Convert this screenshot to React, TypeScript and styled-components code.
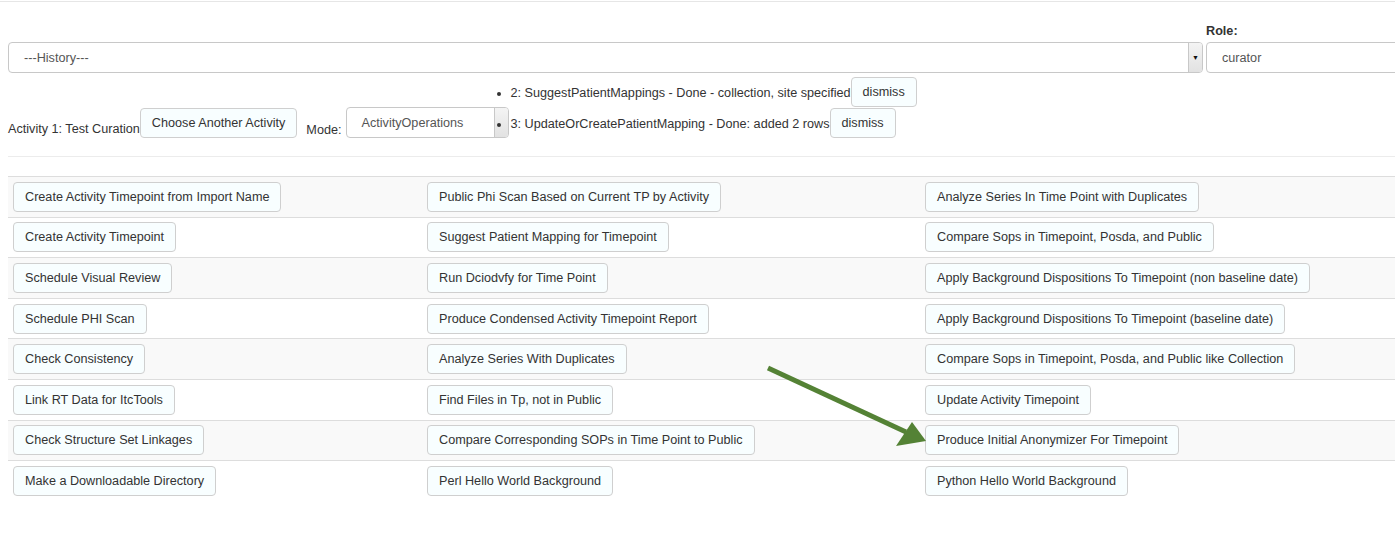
import React from "react";
import styled, { createGlobalStyle } from "styled-components";

const GlobalStyle = createGlobalStyle`
  html, body { margin: 0; padding: 0; background: #fff; }
  body {
    font-family: "Liberation Sans", Arial, Helvetica, sans-serif;
    font-size: 12.65px;
    color: #333;
    overflow: hidden;
    width: 1395px;
  }
  * { box-sizing: border-box; }
`;

const Page = styled.div`
  position: relative;
  width: 1395px;
  height: 551px;
  overflow: hidden;
`;

const TopRule = styled.div`
  margin-top: 1px;
  height: 1px;
  background: #e6e6e6;
`;

const Header = styled.div`
  display: flex;
  align-items: flex-end;
  gap: 3px;
  padding: 20px 0 0 8px;
  width: 1500px;
`;

const RoleColumn = styled.div`
  display: flex;
  flex-direction: column;
`;

const RoleLabel = styled.label`
  font-weight: bold;
  line-height: 18px;
  margin-bottom: 2px;
  color: #333;
`;

const SelectBox = styled.div<{ $w: number }>`
  display: flex;
  align-items: stretch;
  width: ${(p) => p.$w}px;
  height: 31px;
  border: 1px solid #c8c8c8;
  border-radius: 4px;
  background: #fff;
  color: #555;
  overflow: hidden;
`;

const SelectText = styled.span`
  flex: 1;
  display: flex;
  align-items: center;
  padding-left: 15px;
  white-space: nowrap;
`;

const ArrowBox = styled.span`
  width: 14px;
  display: flex;
  align-items: center;
  justify-content: center;
  background: linear-gradient(#f4f4f4, #e2e2e2);
  border-left: 1px solid #c8c8c8;
  font-size: 7px;
  color: #111;
`;

const ControlRow = styled.div`
  display: flex;
  align-items: flex-end;
  padding-left: 8px;
  margin-top: 4px;
  width: 1500px;
`;

const InlineLabel = styled.span<{ $ml?: number; $mr?: number; $pb?: number }>`
  line-height: 15px;
  margin-left: ${(p) => p.$ml ?? 0}px;
  margin-right: ${(p) => p.$mr ?? 0}px;
  padding-bottom: ${(p) => p.$pb ?? 0}px;
  white-space: nowrap;
`;

const Button = styled.button`
  font-family: "Liberation Sans", Arial, Helvetica, sans-serif;
  font-size: 12.65px;
  color: #333;
  height: 30px;
  padding: 0 11px;
  background: #f8feff;
  border: 1px solid #cfcfcf;
  border-radius: 4px;
  white-space: nowrap;
  line-height: 28px;
  cursor: pointer;
`;

const StatusList = styled.ul`
  margin: 0;
  padding: 0 0 0 2px;
  list-style: disc outside;
  display: flex;
  flex-direction: column;
  gap: 1px;
`;

const StatusItem = styled.li`
  display: list-item;
  height: 30px;
`;

const StatusLine = styled.span`
  display: inline-flex;
  align-items: center;
  height: 30px;
  white-space: nowrap;
`;

const StatusText = styled.span`
  padding-top: 1px;
`;

const Divider = styled.div`
  margin: 18px 0 0 8px;
  height: 1px;
  background: #ececec;
`;

const Table = styled.div`
  margin: 19px 0 0 8px;
  display: grid;
  grid-template-columns: 414px 498px 1fr;
`;

const Cell = styled.div<{ $striped: boolean }>`
  border-top: 1px solid #dddddd;
  background: ${(p) => (p.$striped ? "#f9f9f9" : "#fff")};
  padding: 4.8px 5px;
  display: flex;
  align-items: center;
`;

const ArrowOverlay = styled.svg`
  position: absolute;
  left: 760px;
  top: 360px;
  overflow: visible;
`;

const rows: [string, string, string][] = [
  ["Create Activity Timepoint from Import Name", "Public Phi Scan Based on Current TP by Activity", "Analyze Series In Time Point with Duplicates"],
  ["Create Activity Timepoint", "Suggest Patient Mapping for Timepoint", "Compare Sops in Timepoint, Posda, and Public"],
  ["Schedule Visual Review", "Run Dciodvfy for Time Point", "Apply Background Dispositions To Timepoint (non baseline date)"],
  ["Schedule PHI Scan", "Produce Condensed Activity Timepoint Report", "Apply Background Dispositions To Timepoint (baseline date)"],
  ["Check Consistency", "Analyze Series With Duplicates", "Compare Sops in Timepoint, Posda, and Public like Collection"],
  ["Link RT Data for ItcTools", "Find Files in Tp, not in Public", "Update Activity Timepoint"],
  ["Check Structure Set Linkages", "Compare Corresponding SOPs in Time Point to Public", "Produce Initial Anonymizer For Timepoint"],
  ["Make a Downloadable Directory", "Perl Hello World Background", "Python Hello World Background"],
];

export default function App() {
  return (
    <Page>
      <GlobalStyle />
      <TopRule />
      <Header>
        <SelectBox $w={1195}>
          <SelectText>---History---</SelectText>
          <ArrowBox>▼</ArrowBox>
        </SelectBox>
        <RoleColumn>
          <RoleLabel>Role:</RoleLabel>
          <SelectBox $w={260}>
            <SelectText>curator</SelectText>
          </SelectBox>
        </RoleColumn>
      </Header>
      <ControlRow>
        <InlineLabel $pb={1.5}>Activity 1: Test Curation</InlineLabel>
        <Button>Choose Another Activity</Button>
        <InlineLabel $ml={9} $mr={4} $pb={0}>Mode:</InlineLabel>
        <SelectBox $w={163}>
          <SelectText>ActivityOperations</SelectText>
          <ArrowBox />
        </SelectBox>
        <StatusList>
          <StatusItem>
            <StatusLine>
              <StatusText>2: SuggestPatientMappings - Done - collection, site specified</StatusText>
              <Button>dismiss</Button>
            </StatusLine>
          </StatusItem>
          <StatusItem>
            <StatusLine>
              <StatusText>3: UpdateOrCreatePatientMapping - Done: added 2 rows</StatusText>
              <Button>dismiss</Button>
            </StatusLine>
          </StatusItem>
        </StatusList>
      </ControlRow>
      <Divider />
      <Table>
        {rows.map((r, i) =>
          r.map((label, j) => (
            <Cell key={`${i}-${j}`} $striped={i % 2 === 0}>
              <Button>{label}</Button>
            </Cell>
          ))
        )}
      </Table>
      <ArrowOverlay width="180" height="100" viewBox="0 0 180 100">
        <line x1="8" y1="8" x2="146" y2="72" stroke="#548235" strokeWidth="5" strokeLinecap="butt" />
        <polygon points="166,81 152,62 136,86" fill="#548235" />
      </ArrowOverlay>
    </Page>
  );
}
